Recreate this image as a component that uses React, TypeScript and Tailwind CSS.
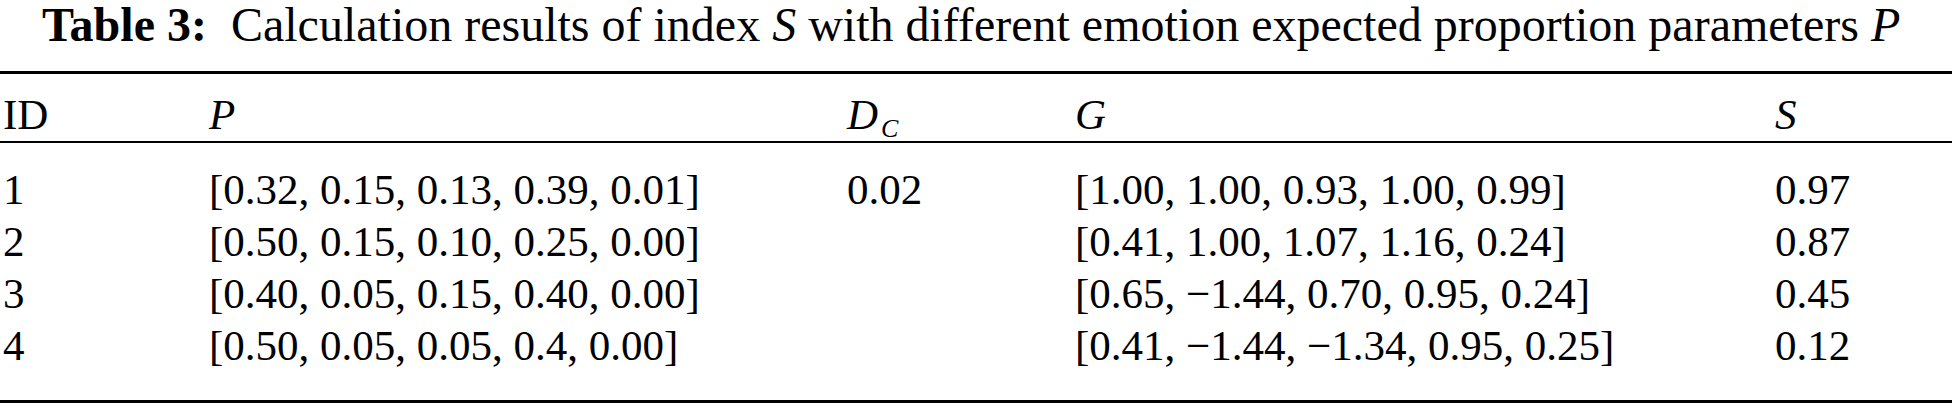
import React from "react";

const rows = [
  { id: "1", p: "[0.32, 0.15, 0.13, 0.39, 0.01]", dc: "0.02", g: "[1.00, 1.00, 0.93, 1.00, 0.99]", s: "0.97" },
  { id: "2", p: "[0.50, 0.15, 0.10, 0.25, 0.00]", dc: "", g: "[0.41, 1.00, 1.07, 1.16, 0.24]", s: "0.87" },
  { id: "3", p: "[0.40, 0.05, 0.15, 0.40, 0.00]", dc: "", g: "[0.65, \u22121.44, 0.70, 0.95, 0.24]", s: "0.45" },
  { id: "4", p: "[0.50, 0.05, 0.05, 0.4, 0.00]", dc: "", g: "[0.41, \u22121.44, \u22121.34, 0.95, 0.25]", s: "0.12" },
];

const grid = "grid grid-cols-[206px_638px_228px_700px_1fr] pl-[3px]";

export default function App() {
  return (
    <div className="w-[1954px] h-[412px] bg-white text-black font-['Liberation_Serif','Times_New_Roman',serif]">
      <div className="pl-[42px] text-[48px] leading-[50px] whitespace-nowrap">
        <span className="font-bold">Table 3:</span>
        <span>{"\u00a0 "}Calculation results of index <i>S</i> with different emotion expected proportion parameters <i>P</i></span>
      </div>
      <div className="mt-[21px] w-[1952px] h-[3px] bg-black" />
      <div className={`${grid} h-[67px] text-[43px] leading-[48px] pt-[17px] pb-[2px]`}>
        <div>ID</div>
        <div><i>P</i></div>
        <div>
          <i>D</i>
          <span className="italic text-[26px] align-[-8px] leading-[0] ml-[3px]">C</span>
        </div>
        <div><i>G</i></div>
        <div><i>S</i></div>
      </div>
      <div className="w-[1952px] h-[2px] bg-black" />
      <div className="pt-[21px] pb-[28px] text-[43px] leading-[52px]">
        {rows.map((r) => (
          <div key={r.id} className={grid}>
            <div>{r.id}</div>
            <div>{r.p}</div>
            <div>{r.dc}</div>
            <div>{r.g}</div>
            <div>{r.s}</div>
          </div>
        ))}
      </div>
      <div className="w-[1952px] h-[3px] bg-black" />
    </div>
  );
}
